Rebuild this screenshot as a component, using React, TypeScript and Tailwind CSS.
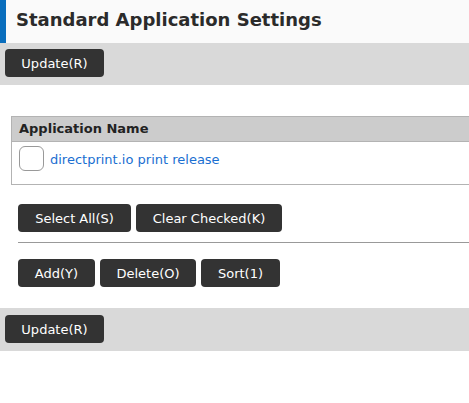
import React from 'react';

const font = { fontFamily: '"DejaVu Sans", Verdana, sans-serif' };

const Btn = ({ label, className = '' }: { label: string; className?: string }) => (
  <button
    className={`h-[28px] rounded-[4px] bg-[#333333] text-white text-[13px] leading-none ${className}`}
  >
    {label}
  </button>
);

const UpdateBar = () => (
  <div className="h-[42px] bg-[#d9d9d9] pl-[5px] pt-[6px]">
    <Btn label="Update(R)" className="w-[99px]" />
  </div>
);

export default function App() {
  return (
    <div className="w-[469px] h-[403px] bg-white overflow-hidden" style={font}>
      {/* Header */}
      <div className="h-[43px] bg-[#fafafa] flex items-center border-l-[6px] border-[#0a6ebd]">
        <h1 className="pl-[10px] pb-[4px] text-[18px] font-bold text-[#2b2b2b] leading-none">
          Standard Application Settings
        </h1>
      </div>

      <UpdateBar />

      <div className="pt-[31px] pl-[11px]">
        {/* Table */}
        <div className="border border-r-0 border-[#b3b3b3]">
          <div className="h-[25px] bg-[#cccccc] border-b border-[#b3b3b3] flex items-center pl-[7px]">
            <span className="text-[13px] font-bold text-[#222222]">Application Name</span>
          </div>
          <div className="h-[42px] flex items-start pl-[7px] pt-[4px] gap-[6px]">
            <div className="w-[25px] h-[25px] rounded-[6px] border border-[#999999] bg-white" />
            <span className="text-[13px] text-[#1a6fd1] mt-[4px]">directprint.io print release</span>
          </div>
        </div>

        <div className="pl-[7px] pt-[19px]">
          <div className="flex gap-[5px]">
            <Btn label="Select All(S)" className="w-[113px]" />
            <Btn label="Clear Checked(K)" className="w-[146px]" />
          </div>
          <div className="mt-[10px] border-t border-[#999999]" />
          <div className="flex gap-[5px] mt-[16px]">
            <Btn label="Add(Y)" className="w-[77px]" />
            <Btn label="Delete(O)" className="w-[96px]" />
            <Btn label="Sort(1)" className="w-[79px]" />
          </div>
        </div>
      </div>

      <div className="mt-[21px]">
        <div className="h-[43px] bg-[#d9d9d9] pl-[5px] pt-[7px]">
          <Btn label="Update(R)" className="w-[99px]" />
        </div>
      </div>
    </div>
  );
}
